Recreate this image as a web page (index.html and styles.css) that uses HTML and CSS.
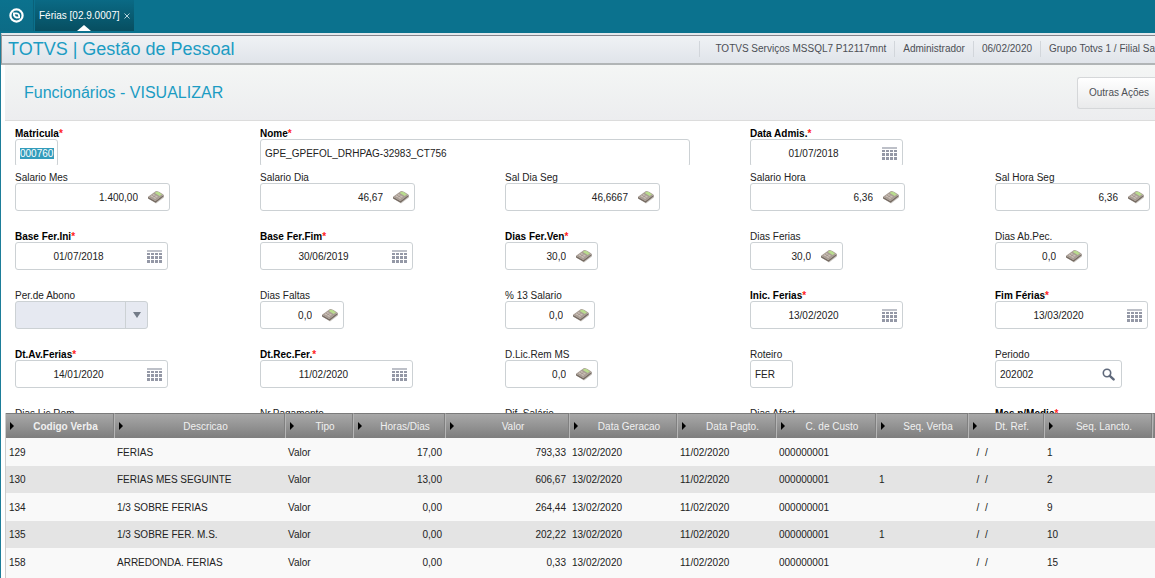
FILE: index.html
```html
<!DOCTYPE html>
<html lang="pt-BR">
<head>
    <meta charset="UTF-8">
    <meta name="viewport" content="width=device-width, initial-scale=1.0">
    <title>TOTVS | Gestão de Pessoal</title>
    <link rel="stylesheet" href="styles.css">
</head>
<body>
    <svg class="sprite" aria-hidden="true">
        <symbol id="ico-calc" viewBox="0 0 18 14">
            <path d="M2 9 L9 13.6 L17 7.4 L16.6 5.5 L2 7z" fill="#c9c5c1"/>
            <path d="M1 6.8 L8.4 11 L16.6 4.8 L16.6 6.6 L8.6 12.8 L1 8.6z" fill="#766b62"/>
            <path d="M1 6.8 L9 1 Q12 1 16.6 4.8 L8.4 11z" fill="#a89d94"/>
            <path d="M9.2 1.8 L11.6 2 L15 4.4 L12.6 6 L7.8 2.9z" fill="#b9dc8e"/>
            <path d="M6.6 4 L11 6.8 L8.2 8.9 L3.4 6.3z" fill="#cbc0b7"/>
            <path d="M5 5.2 L9.6 7.8 M5.6 7.5 L8.6 5.3" stroke="#93877d" stroke-width="0.6"/>
        </symbol>
        <symbol id="ico-cal" viewBox="0 0 15 13">
            <path d="M0 0h15v2H0z" fill="#bdc0c8"/>
            <path d="M0 3h3v2H0zM4 3h3v2H4zM8 3h3v2H8zM12 3h3v2h-3zM0 6h3v3H0zM4 6h3v3H4zM8 6h3v3H8zM12 6h3v3h-3zM0 10h3v3H0zM4 10h3v3H4zM8 10h3v3H8zM12 10h3v3h-3z" fill="#9498a6"/>
        </symbol>
        <symbol id="ico-search" viewBox="0 0 13 13">
            <circle cx="5" cy="5" r="3.7" fill="none" stroke="#5f697b" stroke-width="1.6"/>
            <path d="M7.8 7.8 L11.6 11.4" stroke="#5f697b" stroke-width="2.4" stroke-linecap="round"/>
        </symbol>
    </svg>

    <nav class="topbar">
        <button type="button" class="home-btn" aria-label="Início">
            <svg width="15" height="15" viewBox="0 0 15 15">
                <circle cx="7.5" cy="7.5" r="6.1" fill="none" stroke="#fff" stroke-width="2.2"/>
                <path d="M4 4.6 L8 4.4 Q10.6 5 11 7.2 L11 10.2 L7.2 10.4 Q4.4 9.4 4.1 7.4z" fill="#fff"/>
                <path d="M5.8 6.2 L8.8 6.6 L9.4 8.8 L6.6 8.2z" fill="#0b6a84"/>
            </svg>
        </button>
        <div class="tab">
            <span>Férias [02.9.0007]</span>
            <button type="button" class="tab-close" aria-label="Fechar">
                <svg width="6" height="6" viewBox="0 0 6 6"><path d="M0.5 0.5 L5.5 5.5 M5.5 0.5 L0.5 5.5" stroke="#b5d3dc"/></svg>
            </button>
        </div>
    </nav>

    <div class="window">
        <header class="titlebar">
            <h1>TOTVS | Gestão de Pessoal</h1>
            <ul class="session">
                <li>TOTVS Serviços MSSQL7 P12117mnt</li>
                <li>Administrador</li>
                <li>06/02/2020</li>
                <li>Grupo Totvs 1 / Filial Sa</li>
            </ul>
        </header>

        <main class="content">
            <div class="toolbar">
                <h2>Funcionários - VISUALIZAR</h2>
                <button type="button" class="actions-btn">Outras Ações</button>
            </div>

            <form>
                <section class="fields fields-head">
                    <div class="field">
                        <label class="required" for="matricula">Matricula</label>
                        <div class="box w-code"><input type="text" id="matricula" class="selected" value="000760" readonly></div>
                    </div>
                    <div class="field span-2">
                        <label class="required" for="nome">Nome</label>
                        <div class="box w-name"><input type="text" id="nome" value="GPE_GPEFOL_DRHPAG-32983_CT756" readonly></div>
                    </div>
                    <div class="field">
                        <label class="required" for="admissao">Data Admis.</label>
                        <div class="box w-date"><input type="text" id="admissao" class="center" value="01/07/2018" readonly><button type="button" aria-label="Calendário"><svg class="cal"><use href="#ico-cal"/></svg></button></div>
                    </div>
                </section>

                <section class="fields fields-body">
                    <div class="field">
                        <label for="sal-mes">Salario Mes</label>
                        <div class="box w-value"><input type="text" id="sal-mes" class="num" value="1.400,00" readonly><button type="button" aria-label="Calculadora"><svg class="calc"><use href="#ico-calc"/></svg></button></div>
                    </div>
                    <div class="field">
                        <label for="sal-dia">Salario Dia</label>
                        <div class="box w-value"><input type="text" id="sal-dia" class="num" value="46,67" readonly><button type="button" aria-label="Calculadora"><svg class="calc"><use href="#ico-calc"/></svg></button></div>
                    </div>
                    <div class="field">
                        <label for="sal-dia-seg">Sal Dia Seg</label>
                        <div class="box w-value"><input type="text" id="sal-dia-seg" class="num" value="46,6667" readonly><button type="button" aria-label="Calculadora"><svg class="calc"><use href="#ico-calc"/></svg></button></div>
                    </div>
                    <div class="field">
                        <label for="sal-hora">Salario Hora</label>
                        <div class="box w-value"><input type="text" id="sal-hora" class="num" value="6,36" readonly><button type="button" aria-label="Calculadora"><svg class="calc"><use href="#ico-calc"/></svg></button></div>
                    </div>
                    <div class="field">
                        <label for="sal-hora-seg">Sal Hora Seg</label>
                        <div class="box w-value"><input type="text" id="sal-hora-seg" class="num" value="6,36" readonly><button type="button" aria-label="Calculadora"><svg class="calc"><use href="#ico-calc"/></svg></button></div>
                    </div>

                    <div class="field">
                        <label class="required" for="base-ini">Base Fer.Ini</label>
                        <div class="box w-date"><input type="text" id="base-ini" class="center" value="01/07/2018" readonly><button type="button" aria-label="Calendário"><svg class="cal"><use href="#ico-cal"/></svg></button></div>
                    </div>
                    <div class="field">
                        <label class="required" for="base-fim">Base Fer.Fim</label>
                        <div class="box w-date"><input type="text" id="base-fim" class="center" value="30/06/2019" readonly><button type="button" aria-label="Calendário"><svg class="cal"><use href="#ico-cal"/></svg></button></div>
                    </div>
                    <div class="field">
                        <label class="required" for="dias-ven">Dias Fer.Ven</label>
                        <div class="box w-days"><input type="text" id="dias-ven" class="num" value="30,0" readonly><button type="button" aria-label="Calculadora"><svg class="calc"><use href="#ico-calc"/></svg></button></div>
                    </div>
                    <div class="field">
                        <label for="dias-ferias">Dias Ferias</label>
                        <div class="box w-days"><input type="text" id="dias-ferias" class="num" value="30,0" readonly><button type="button" aria-label="Calculadora"><svg class="calc"><use href="#ico-calc"/></svg></button></div>
                    </div>
                    <div class="field">
                        <label for="dias-abono">Dias Ab.Pec.</label>
                        <div class="box w-days"><input type="text" id="dias-abono" class="num" value="0,0" readonly><button type="button" aria-label="Calculadora"><svg class="calc"><use href="#ico-calc"/></svg></button></div>
                    </div>

                    <div class="field">
                        <label for="per-abono">Per.de Abono</label>
                        <div class="box w-select">
                            <select id="per-abono" disabled><option></option></select>
                            <span class="caret"></span>
                        </div>
                    </div>
                    <div class="field">
                        <label for="faltas">Dias Faltas</label>
                        <div class="box w-absence"><input type="text" id="faltas" class="num" value="0,0" readonly><button type="button" aria-label="Calculadora"><svg class="calc"><use href="#ico-calc"/></svg></button></div>
                    </div>
                    <div class="field">
                        <label for="perc-13">% 13 Salario</label>
                        <div class="box w-percent"><input type="text" id="perc-13" class="num" value="0,0" readonly><button type="button" aria-label="Calculadora"><svg class="calc"><use href="#ico-calc"/></svg></button></div>
                    </div>
                    <div class="field">
                        <label class="required" for="inicio">Inic. Ferias</label>
                        <div class="box w-date"><input type="text" id="inicio" class="center" value="13/02/2020" readonly><button type="button" aria-label="Calendário"><svg class="cal"><use href="#ico-cal"/></svg></button></div>
                    </div>
                    <div class="field">
                        <label class="required" for="fim">Fim Férias</label>
                        <div class="box w-date"><input type="text" id="fim" class="center" value="13/03/2020" readonly><button type="button" aria-label="Calendário"><svg class="cal"><use href="#ico-cal"/></svg></button></div>
                    </div>

                    <div class="field">
                        <label class="required" for="aviso">Dt.Av.Ferias</label>
                        <div class="box w-date"><input type="text" id="aviso" class="center" value="14/01/2020" readonly><button type="button" aria-label="Calendário"><svg class="cal"><use href="#ico-cal"/></svg></button></div>
                    </div>
                    <div class="field">
                        <label class="required" for="recibo">Dt.Rec.Fer.</label>
                        <div class="box w-date"><input type="text" id="recibo" class="center" value="11/02/2020" readonly><button type="button" aria-label="Calendário"><svg class="cal"><use href="#ico-cal"/></svg></button></div>
                    </div>
                    <div class="field">
                        <label for="lic-ms">D.Lic.Rem MS</label>
                        <div class="box w-days"><input type="text" id="lic-ms" class="num" value="0,0" readonly><button type="button" aria-label="Calculadora"><svg class="calc"><use href="#ico-calc"/></svg></button></div>
                    </div>
                    <div class="field">
                        <label for="roteiro">Roteiro</label>
                        <div class="box w-code"><input type="text" id="roteiro" value="FER" readonly></div>
                    </div>
                    <div class="field">
                        <label for="periodo">Periodo</label>
                        <div class="box w-period"><input type="text" id="periodo" value="202002" readonly><button type="button" aria-label="Pesquisar"><svg class="search"><use href="#ico-search"/></svg></button></div>
                    </div>

                    <div class="field">
                        <label for="lic-rem">Dias Lic.Rem</label>
                        <div class="box w-days"><input type="text" id="lic-rem" readonly></div>
                    </div>
                    <div class="field">
                        <label for="pagamento">Nr.Pagamento</label>
                        <div class="box w-days"><input type="text" id="pagamento" readonly></div>
                    </div>
                    <div class="field">
                        <label for="dif-salario">Dif. Salário</label>
                        <div class="box w-days"><input type="text" id="dif-salario" readonly></div>
                    </div>
                    <div class="field">
                        <label for="afast">Dias Afast.</label>
                        <div class="box w-days"><input type="text" id="afast" readonly></div>
                    </div>
                    <div class="field">
                        <label class="required" for="media">Mes p/Media</label>
                        <div class="box w-days"><input type="text" id="media" readonly></div>
                    </div>
                </section>
            </form>

            <div class="grid-panel">
                <table>
                    <colgroup>
                        <col class="c-108"><col class="c-171"><col class="c-68"><col class="c-92"><col class="c-124"><col class="c-108">
                        <col class="c-99"><col class="c-100"><col class="c-92"><col class="c-76"><col class="c-108"><col>
                    </colgroup>
                    <thead>
                        <tr>
                            <th class="key"><div>Codigo Verba</div></th>
                            <th><div>Descricao</div></th>
                            <th><div>Tipo</div></th>
                            <th><div>Horas/Dias</div></th>
                            <th><div>Valor</div></th>
                            <th><div>Data Geracao</div></th>
                            <th><div>Data Pagto.</div></th>
                            <th><div>C. de Custo</div></th>
                            <th><div>Seq. Verba</div></th>
                            <th><div>Dt. Ref.</div></th>
                            <th><div>Seq. Lancto.</div></th>
                            <th></th>
                        </tr>
                    </thead>
                    <tbody>
                        <tr><td>129</td><td>FERIAS</td><td>Valor</td><td class="num">17,00</td><td class="num">793,33</td><td>13/02/2020</td><td>11/02/2020</td><td>000000001</td><td></td><td class="ref">  /  /</td><td>1</td><td></td></tr>
                        <tr><td>130</td><td>FERIAS MES SEGUINTE</td><td>Valor</td><td class="num">13,00</td><td class="num">606,67</td><td>13/02/2020</td><td>11/02/2020</td><td>000000001</td><td>1</td><td class="ref">  /  /</td><td>2</td><td></td></tr>
                        <tr><td>134</td><td>1/3 SOBRE FERIAS</td><td>Valor</td><td class="num">0,00</td><td class="num">264,44</td><td>13/02/2020</td><td>11/02/2020</td><td>000000001</td><td></td><td class="ref">  /  /</td><td>9</td><td></td></tr>
                        <tr><td>135</td><td>1/3 SOBRE FER. M.S.</td><td>Valor</td><td class="num">0,00</td><td class="num">202,22</td><td>13/02/2020</td><td>11/02/2020</td><td>000000001</td><td>1</td><td class="ref">  /  /</td><td>10</td><td></td></tr>
                        <tr><td>158</td><td>ARREDONDA. FERIAS</td><td>Valor</td><td class="num">0,00</td><td class="num">0,33</td><td>13/02/2020</td><td>11/02/2020</td><td>000000001</td><td></td><td class="ref">  /  /</td><td>15</td><td></td></tr>
                    </tbody>
                </table>
            </div>
        </main>
    </div>
</body>
</html>
```

FILE: styles.css
```css
* {
    margin: 0;
    padding: 0;
    box-sizing: border-box;
}
body {
    font-family: "Liberation Sans", Arial, sans-serif;
    font-size: 10px;
    color: #222;
    background-color: #fff;
    display: flex;
    flex-direction: column;
    height: 100vh;
    overflow: hidden;
}
button, input, select {
    font: inherit;
    color: inherit;
    border: none;
    background: none;
}
button {
    cursor: pointer;
}
.sprite {
    display: none;
}

/* top bar */
.topbar {
    display: flex;
    align-items: flex-start;
    height: 33px;
    background-color: #0b728e;
}
.home-btn {
    width: 34px;
    height: 31px;
    display: flex;
    align-items: center;
    justify-content: center;
    border-right: 1px solid #0a6179;
    background: linear-gradient(#0b728e, #0c6b86);
}
.tab {
    position: relative;
    display: flex;
    align-items: center;
    gap: 4px;
    height: 31px;
    margin-left: 1px;
    padding: 0 4px;
    color: #fff;
    background: linear-gradient(#0a6a85, #074e60);
}
.tab::after {
    content: '';
    position: absolute;
    left: 42px;
    bottom: 0;
    border-left: 7px solid transparent;
    border-right: 7px solid transparent;
    border-bottom: 6px solid #fff;
}
.tab-close {
    display: flex;
}

/* window */
.window {
    flex: 1;
    display: flex;
    flex-direction: column;
    min-height: 0;
    border-left: 1px solid #1d7d99;
}
.titlebar {
    display: flex;
    align-items: center;
    height: 32px;
    border-top: 2px solid #e4e8ec;
    border-bottom: 2px solid #b1b5b6;
    border-left: 1px solid #999;
    background: linear-gradient(#f0f2f5, #e0e4ea);
    box-shadow: inset 0 1px 0 #83838b;
}
.titlebar h1 {
    padding-left: 6px;
    font-size: 18px;
    font-weight: normal;
    color: #1b9cc3;
    white-space: nowrap;
}
.session {
    display: flex;
    flex-shrink: 0;
    margin-left: auto;
    list-style: none;
    color: #4c4f55;
}
.session li {
    padding: 0 8px;
    line-height: 16px;
    border-left: 1px solid #d2d6db;
}
.session li:first-child {
    padding-left: 15px;
}
.session li:last-child {
    padding-right: 0;
}
.content {
    flex: 1;
    display: flex;
    flex-direction: column;
    min-height: 0;
    padding-left: 4px;
}
.toolbar {
    display: flex;
    align-items: center;
    justify-content: space-between;
    height: 56px;
    padding-left: 19px;
    border-bottom: 1px solid #dcdcdc;
    background: linear-gradient(#f4f6f5, #ecedef);
}
.toolbar h2 {
    font-size: 16px;
    font-weight: normal;
    color: #1b9cc3;
}
.actions-btn {
    height: 32px;
    padding: 0 6px 0 11px;
    color: #4c4f55;
    border: 1px solid #d5d7d9;
    border-right: none;
    border-radius: 3px 0 0 3px;
    background: linear-gradient(#fff, #e9eaeb);
}

/* form */
.fields {
    display: grid;
    grid-template-columns: repeat(5, minmax(245px, 1fr));
    grid-auto-rows: 41px;
    row-gap: 18px;
    padding: 5px 0 0 10px;
    overflow: hidden;
}
.fields-head {
    height: 44px;
}
.fields-body {
    height: 248px;
}
.span-2 {
    grid-column: span 2;
}
.field label {
    display: block;
    height: 13px;
    line-height: 15px;
}
.field .required {
    font-weight: bold;
    color: #000;
}
.required::after {
    content: '*';
    color: #f22;
}
.box {
    display: flex;
    align-items: center;
    height: 28px;
    border: 1px solid #ccd1d4;
    border-radius: 3px;
    background-color: #fff;
}
.box input {
    flex: 1;
    min-width: 0;
    padding: 0 4px;
    outline: none;
}
.box .num {
    padding-right: 5px;
    text-align: right;
}
.box .center {
    text-align: center;
    padding: 0;
}
.box button {
    width: 26px;
    display: flex;
    justify-content: center;
}
.box .selected {
    flex: none;
    padding: 0;
    margin-left: 4px;
    width: 34px;
    color: #fff;
    background-color: #339cbb;
}
.calc {
    width: 18px;
    height: 14px;
}
.cal {
    width: 15px;
    height: 13px;
}
.search {
    width: 13px;
    height: 13px;
}
.w-code {
    width: 43px;
}
.w-percent {
    width: 90px;
}
.w-absence {
    width: 84px;
}
.w-days {
    width: 93px;
}
.w-period {
    width: 127px;
}
.w-select {
    width: 133px;
    background-color: #e6e9f1;
}
.w-date {
    width: 153px;
}
.w-value {
    width: 155px;
}
.w-name {
    width: 430px;
}
.w-select select {
    flex: 1;
    height: 100%;
    appearance: none;
}
.caret {
    display: flex;
    align-items: center;
    justify-content: center;
    width: 22px;
    height: 100%;
    border-left: 1px solid #ccd1d4;
}
.caret::after {
    content: '';
    border-left: 4px solid transparent;
    border-right: 4px solid transparent;
    border-top: 6px solid #737b87;
}

/* grid */
.grid-panel {
    flex: 1;
    min-height: 0;
    overflow: hidden;
    border-left: 1px solid #ccc;
    background-color: #f9f9f9;
}
table {
    width: 100%;
    table-layout: fixed;
    border-collapse: separate;
    border-spacing: 0;
}
th {
    height: 25px;
    font-weight: normal;
    color: #f0f0f0;
    border-top: 1px solid #7b7b7b;
    border-left: 1px solid #b5b5b5;
    border-right: 1px solid #808080;
    background: linear-gradient(#a8a8a8, #7e7e7e);
}
th:first-child {
    border-left: none;
}
th.key {
    font-weight: bold;
}
th div {
    display: flex;
    align-items: center;
    justify-content: center;
    padding-left: 4px;
}
th div::before {
    content: '';
    margin-right: auto;
    border-top: 4px solid transparent;
    border-bottom: 4px solid transparent;
    border-left: 4px solid #000;
    border-right: 4px solid transparent;
}
th div::after {
    content: '';
    margin-left: auto;
}
td {
    height: 28px;
    padding: 0 3px;
    white-space: nowrap;
    background-color: #f9f9f9;
}
tr:nth-child(even) td {
    height: 27px;
    background-color: #e4e4e4;
}
td.num {
    text-align: right;
}
td.ref {
    white-space: pre;
}
.c-68 {
    width: 68px;
}
.c-76 {
    width: 76px;
}
.c-92 {
    width: 92px;
}
.c-99 {
    width: 99px;
}
.c-100 {
    width: 100px;
}
.c-108 {
    width: 108px;
}
.c-124 {
    width: 124px;
}
.c-171 {
    width: 171px;
}
```
